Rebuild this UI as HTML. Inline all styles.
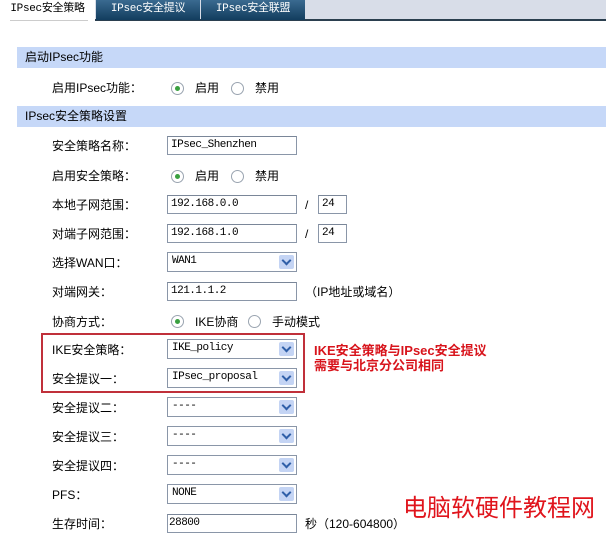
<!DOCTYPE html>
<html><head><meta charset="utf-8"><style>
*{margin:0;padding:0;box-sizing:border-box}
body{width:606px;height:536px;background:#fff;position:relative;overflow:hidden;font-family:"Liberation Sans","Noto Sans CJK SC",sans-serif;font-size:12px;color:#000}
.a{position:absolute;white-space:nowrap;line-height:14px}
.tabbar{position:absolute;left:0;top:0;width:606px;height:21px;background:#d8dde8;border-bottom:2px solid #2b3f4f}
.tab{position:absolute;top:0;height:20px;line-height:19px;color:#fff;background:linear-gradient(#3a6a90,#123d5e);text-align:center;font-family:"Liberation Mono","Noto Sans CJK SC",monospace;font-size:11px;letter-spacing:-0.3px}
.hd{position:absolute;left:17px;width:589px;height:21px;background:#c6d8f8;line-height:21px;padding-left:8px}
.inp{position:absolute;height:19px;border:1px solid #8a96a8;border-top-color:#7a8698;background:#fff;line-height:17px;padding-left:3px;font-family:"Liberation Mono","Noto Sans CJK SC",monospace;font-size:11px;letter-spacing:-0.5px}
.sel{position:absolute;left:167px;width:130px;height:20px;border:1px solid #8a96a8;background:#fff;line-height:17px;padding-left:4px;font-family:"Liberation Mono",monospace;font-size:11px;letter-spacing:-0.5px}
.sel i{position:absolute;right:2px;top:2px;width:15px;height:14px;background:#c4d4f4;border-radius:2px}
.sel i:after{content:"";position:absolute;left:4px;top:2px;width:5px;height:5px;border-right:2px solid #2f5fa8;border-bottom:2px solid #2f5fa8;transform:rotate(45deg)}
.r{position:absolute;width:13px;height:13px;border:1px solid #9aa4b0;border-radius:50%;background:#fff}
.r.on:after{content:"";position:absolute;left:3px;top:3px;width:5px;height:5px;border-radius:50%;background:#3aa040}
</style></head><body>
<div class="tabbar"></div>
<div class="a" style="left:0;top:0;width:95px;height:21px;background:#fff;line-height:19px;text-align:center;font-family:'Liberation Mono','Noto Sans CJK SC',monospace;font-size:11px;letter-spacing:-0.3px">IPsec安全策略</div>
<div class="a" style="left:10px;top:20px;width:78px;height:1px;background:#ccc"></div>
<div class="tab" style="left:96px;width:104px">IPsec安全提议</div>
<div class="tab" style="left:201px;width:104px">IPsec安全联盟</div>

<div class="hd" style="top:47px">启动IPsec功能</div>
<div class="a" style="left:52px;top:81px">启用IPsec功能：</div>
<div class="r on" style="left:171px;top:82px"></div><div class="a" style="left:195px;top:81px">启用</div>
<div class="r" style="left:231px;top:82px"></div><div class="a" style="left:255px;top:81px">禁用</div>

<div class="hd" style="top:106px">IPsec安全策略设置</div>
<div class="a" style="left:52px;top:139px">安全策略名称：</div>
<div class="inp" style="left:167px;top:136px;width:130px">IPsec_Shenzhen</div>

<div class="a" style="left:52px;top:169px">启用安全策略：</div>
<div class="r on" style="left:171px;top:170px"></div><div class="a" style="left:195px;top:169px">启用</div>
<div class="r" style="left:231px;top:170px"></div><div class="a" style="left:255px;top:169px">禁用</div>

<div class="a" style="left:52px;top:198px">本地子网范围：</div>
<div class="inp" style="left:167px;top:195px;width:130px">192.168.0.0</div>
<div class="a" style="left:305px;top:198px">/</div>
<div class="inp" style="left:318px;top:195px;width:29px">24</div>

<div class="a" style="left:52px;top:227px">对端子网范围：</div>
<div class="inp" style="left:167px;top:224px;width:130px">192.168.1.0</div>
<div class="a" style="left:305px;top:227px">/</div>
<div class="inp" style="left:318px;top:224px;width:29px">24</div>

<div class="a" style="left:52px;top:256px">选择WAN口：</div>
<div class="sel" style="top:252px">WAN1<i></i></div>

<div class="a" style="left:52px;top:285px">对端网关：</div>
<div class="inp" style="left:167px;top:282px;width:130px">121.1.1.2</div>
<div class="a" style="left:305px;top:285px">（IP地址或域名）</div>

<div class="a" style="left:52px;top:315px">协商方式：</div>
<div class="r on" style="left:171px;top:315px"></div><div class="a" style="left:195px;top:315px">IKE协商</div>
<div class="r" style="left:248px;top:315px"></div><div class="a" style="left:272px;top:315px">手动模式</div>

<div class="a" style="left:41px;top:333px;width:264px;height:60px;border:2px solid #c0303a"></div>
<div class="a" style="left:52px;top:343px">IKE安全策略：</div>
<div class="sel" style="top:339px">IKE_policy<i></i></div>
<div class="a" style="left:52px;top:372px">安全提议一：</div>
<div class="sel" style="top:368px">IPsec_proposal<i></i></div>
<div class="a" style="left:314px;top:343px;color:#d8141c;font-weight:bold;font-size:13px;line-height:15px">IKE安全策略与IPsec安全提议<br>需要与北京分公司相同</div>

<div class="a" style="left:52px;top:401px">安全提议二：</div>
<div class="sel" style="top:397px">----<i></i></div>
<div class="a" style="left:52px;top:430px">安全提议三：</div>
<div class="sel" style="top:426px">----<i></i></div>
<div class="a" style="left:52px;top:459px">安全提议四：</div>
<div class="sel" style="top:455px">----<i></i></div>
<div class="a" style="left:52px;top:488px">PFS：</div>
<div class="sel" style="top:484px">NONE<i></i></div>

<div class="a" style="left:52px;top:517px">生存时间：</div>
<div class="inp" style="left:167px;top:514px;width:130px;padding-left:1px">28800</div>
<div class="a" style="left:305px;top:517px">秒（120-604800）</div>

<div class="a" style="left:403px;top:494px;color:#e0141c;font-size:24px;line-height:30px">电脑软硬件教程网</div>
</body></html>
